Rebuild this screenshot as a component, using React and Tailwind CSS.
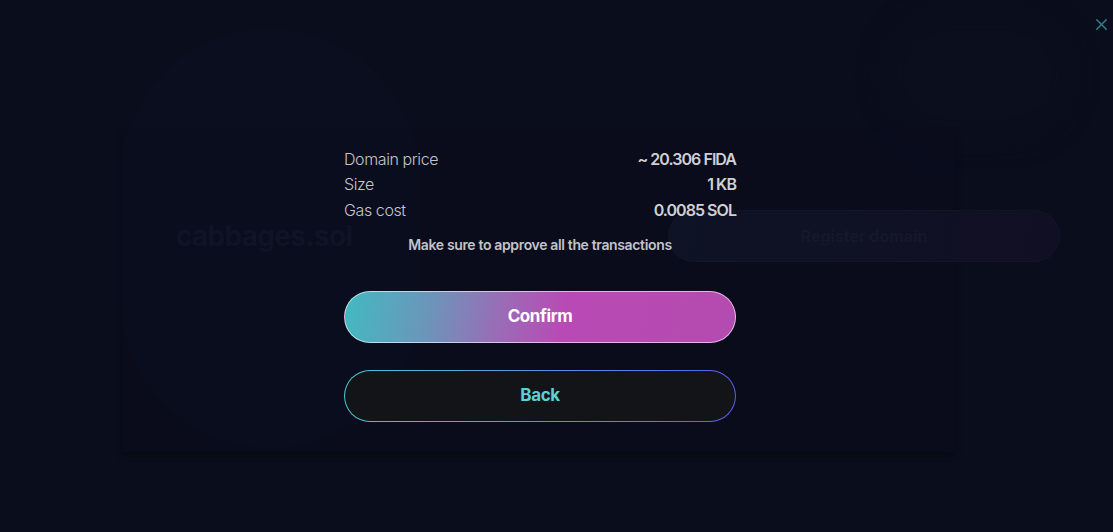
import React from 'react'
import { X } from 'lucide-react'

const rows = [
  { label: 'Domain price', value: '~ 20.306 FIDA' },
  { label: 'Size', value: '1 KB' },
  { label: 'Gas cost', value: '0.0085 SOL' },
]

const App = () => {
  return (
    <div className="relative h-[532px] w-full overflow-hidden bg-[#0a0d1c] font-['Inter',sans-serif]">
      {/* faint page under the modal */}
      <div className="pointer-events-none absolute left-[120px] top-[28px] h-[420px] w-[300px] rounded-[150px] bg-[#0b0e1f]"></div>
      <div className="pointer-events-none absolute left-[160px] top-[180px] h-[260px] w-[250px] rounded-full bg-[#0a0f20]"></div>
      <div className="pointer-events-none absolute right-[40px] top-[10px] h-[130px] w-[190px] rounded-full bg-[#0b0e1d] blur-md"></div>

      <div className="relative pl-[122px] pt-[130px]">
        <div className="h-[322px] w-[833px] bg-[#0a0d1d]/70 shadow-[0_4px_6px_rgba(0,0,0,0.35)]">
          <div className="flex items-center pl-[54px] pt-[80px]">
            <div className="w-[492px] shrink-0 text-[28px] font-bold tracking-tight text-[#101325]">cabbages.sol</div>
            <div className="flex h-[52px] w-[392px] shrink-0 items-center justify-center rounded-full border border-[#121628] bg-[linear-gradient(100deg,#0e1325,#110f23)] text-[16px] font-bold text-[#15182a]">
              Register domain
            </div>
          </div>
        </div>
      </div>

      {/* modal overlay */}
      <div className="absolute inset-0 flex pl-[344px]">
        <div className="flex w-[392px] flex-col pt-[146px]">
          {rows.map((r) => (
            <div key={r.label} className="flex h-[25.5px] items-center justify-between text-[16px]">
              <span className="font-light tracking-tight text-[#c4c5cc]">{r.label}</span>
              <span className="font-semibold tracking-[-0.06em] text-[#cfd0d6]">{r.value}</span>
            </div>
          ))}
          <div className="mt-[11px] text-center text-[14px] font-semibold tracking-tight text-[#c2c3ca]">
            Make sure to approve all the transactions
          </div>

          <button className="mt-[36px] flex h-[52px] w-full items-center justify-center rounded-full border border-white/60 bg-[linear-gradient(100deg,#42bac1_0%,#6c95ba_22%,#9a6cb6_40%,#b94ab5_56%,#b44bb0_100%)] text-[17px] font-bold tracking-tight text-white">
            Confirm
          </button>

          <div className="mt-[27px] rounded-full bg-gradient-to-r from-[#4cc3cf] to-[#5a5cf0] p-px">
            <button className="flex h-[50px] w-full items-center justify-center rounded-full bg-[#131418] text-[17px] font-bold tracking-tight text-[#5ecfd8]">
              Back
            </button>
          </div>
        </div>
      </div>

      <button className="absolute right-[2px] top-[15px] text-[#2f7c82]">
        <X size={19} strokeWidth={2} />
      </button>
    </div>
  )
}

export default App
